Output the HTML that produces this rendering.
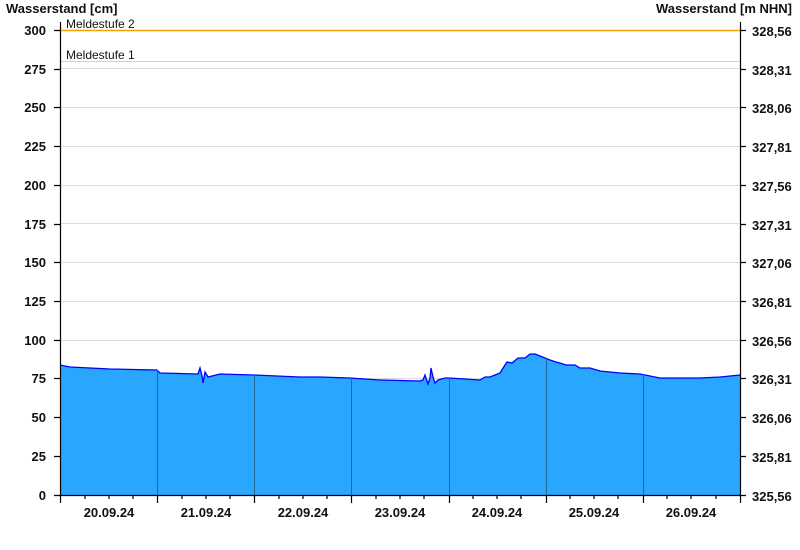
<!DOCTYPE html>
<html><head><meta charset="utf-8"><style>
html,body{margin:0;padding:0;background:#fff;}
svg{display:block;font-family:"Liberation Sans",Arial,sans-serif;}
.l{font-size:13px;font-weight:bold;fill:#111;}
</style></head><body>
<svg width="800" height="550" viewBox="0 0 800 550" xmlns="http://www.w3.org/2000/svg">
<rect width="800" height="550" fill="#fff"/>
<g stroke="#dcdcdc" stroke-width="1">
<line x1="60" y1="68.5" x2="740" y2="68.5"/><line x1="60" y1="107.5" x2="740" y2="107.5"/>
<line x1="60" y1="146.5" x2="740" y2="146.5"/><line x1="60" y1="185.5" x2="740" y2="185.5"/>
<line x1="60" y1="223.5" x2="740" y2="223.5"/><line x1="60" y1="262.5" x2="740" y2="262.5"/>
<line x1="60" y1="301.5" x2="740" y2="301.5"/><line x1="60" y1="340.5" x2="740" y2="340.5"/>
<line x1="60" y1="378.5" x2="740" y2="378.5"/><line x1="60" y1="417.5" x2="740" y2="417.5"/>
<line x1="60" y1="456.5" x2="740" y2="456.5"/>
</g>
<line x1="60" y1="30.5" x2="740" y2="30.5" stroke="#f5a300" stroke-width="1.5"/>
<line x1="60" y1="61.5" x2="740" y2="61.5" stroke="#f7d070" stroke-width="1"/>
<text x="66" y="28" font-size="12" fill="#111">Meldestufe 2</text>
<text x="66" y="59" font-size="12" fill="#111">Meldestufe 1</text>
<polygon fill="#29a6fd" points="60,495 60,365 70,367 110,369 157,370 160,373 198,374 200,368 202,376 203,383 205,372 208,377 220,374 254,375 300,377 320,377 350,378 380,380 420,381 423,380 425,375 428,384 430,378 431,368 433,377 435,383 438,380 445,378 449,378 480,380 485,377 490,377 495,375 500,373 505,365 507,362 512,363 518,358 525,358 530,354 535,354 540,356 545,358 550,360 556,362 560,363 566,365 575,365 580,368 590,368 600,371 620,373 640,374 660,378 680,378 700,378 720,377 740,375 740,495"/>
<polyline fill="none" stroke="#0000ff" stroke-width="1.3" points="60,365 70,367 110,369 157,370 160,373 198,374 200,368 202,376 203,383 205,372 208,377 220,374 254,375 300,377 320,377 350,378 380,380 420,381 423,380 425,375 428,384 430,378 431,368 433,377 435,383 438,380 445,378 449,378 480,380 485,377 490,377 495,375 500,373 505,365 507,362 512,363 518,358 525,358 530,354 535,354 540,356 545,358 550,360 556,362 560,363 566,365 575,365 580,368 590,368 600,371 620,373 640,374 660,378 680,378 700,378 720,377 740,375"/>
<g stroke="#1f6a99" stroke-width="1">
<line x1="157.5" y1="370" x2="157.5" y2="495"/><line x1="254.5" y1="375" x2="254.5" y2="495"/>
<line x1="351.5" y1="378" x2="351.5" y2="495"/><line x1="449.5" y1="378" x2="449.5" y2="495"/>
<line x1="546.5" y1="358" x2="546.5" y2="495"/><line x1="643.5" y1="374" x2="643.5" y2="495"/>
</g>
<g stroke="#000" stroke-width="1.2">
<line x1="60.5" y1="22" x2="60.5" y2="495"/><line x1="740.5" y1="22" x2="740.5" y2="495"/>
<line x1="60" y1="495.5" x2="741" y2="495.5"/>
<path d="M54 30.5H60M54 69.5H60M54 107.5H60M54 146.5H60M54 185.5H60M54 224.5H60M54 262.5H60M54 301.5H60M54 340.5H60M54 378.5H60M54 417.5H60M54 456.5H60M54 495.5H60"/>
<path d="M740 30.5H746M740 69.5H746M740 107.5H746M740 146.5H746M740 185.5H746M740 224.5H746M740 262.5H746M740 301.5H746M740 340.5H746M740 378.5H746M740 417.5H746M740 456.5H746M740 495.5H746"/>
<path d="M60.5 495V503M157.5 495V503M254.5 495V503M351.5 495V503M449.5 495V503M546.5 495V503M643.5 495V503M740.5 495V503"/>
<path d="M85 495V499M109 495V499M133 495V499M182 495V499M206 495V499M230 495V499M279 495V499M303 495V499M327 495V499M376 495V499M400 495V499M424 495V499M473 495V499M497 495V499M521 495V499M570 495V499M594 495V499M618 495V499M667 495V499M691 495V499M716 495V499"/>
</g>
<text class="l" x="6" y="13">Wasserstand [cm]</text>
<text class="l" x="792" y="13" text-anchor="end">Wasserstand [m NHN]</text>
<g class="l" text-anchor="end">
<text x="46" y="35">300</text><text x="46" y="74">275</text><text x="46" y="112">250</text>
<text x="46" y="151">225</text><text x="46" y="190">200</text><text x="46" y="229">175</text>
<text x="46" y="267">150</text><text x="46" y="306">125</text><text x="46" y="345">100</text>
<text x="46" y="383">75</text><text x="46" y="422">50</text><text x="46" y="461">25</text>
<text x="46" y="500">0</text>
</g>
<g class="l">
<text x="752" y="36">328,56</text><text x="752" y="75">328,31</text><text x="752" y="113">328,06</text>
<text x="752" y="152">327,81</text><text x="752" y="191">327,56</text><text x="752" y="230">327,31</text>
<text x="752" y="268">327,06</text><text x="752" y="307">326,81</text><text x="752" y="346">326,56</text>
<text x="752" y="384">326,31</text><text x="752" y="423">326,06</text><text x="752" y="462">325,81</text>
<text x="752" y="501">325,56</text>
</g>
<g class="l" text-anchor="middle">
<text x="109" y="517">20.09.24</text><text x="206" y="517">21.09.24</text><text x="303" y="517">22.09.24</text>
<text x="400" y="517">23.09.24</text><text x="497" y="517">24.09.24</text><text x="594" y="517">25.09.24</text>
<text x="691" y="517">26.09.24</text>
</g>
</svg>
</body></html>
